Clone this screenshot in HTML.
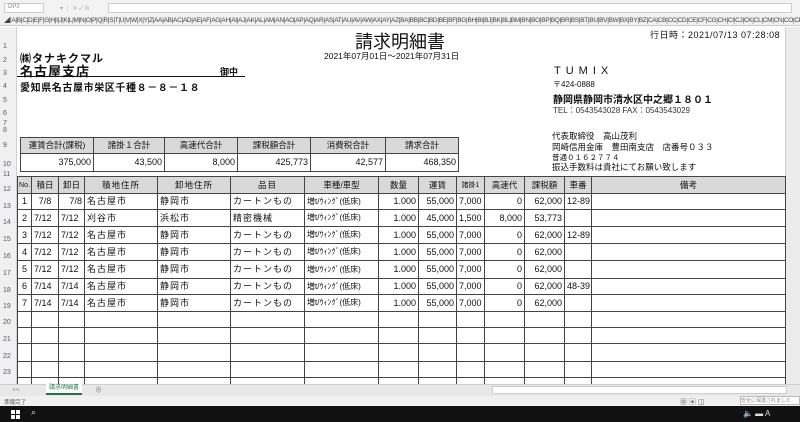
<!DOCTYPE html>
<html><head><meta charset="utf-8"><style>
*{margin:0;padding:0;box-sizing:border-box}
body{width:800px;height:422px;overflow:hidden;background:#fff;font-family:"Liberation Sans","Noto Sans CJK JP",sans-serif;position:relative;color:#111}
.a{position:absolute;white-space:nowrap}
.rn{position:absolute;left:3px;font-size:7px;color:#556;width:12px}
table{border-collapse:collapse;position:absolute;table-layout:fixed}
td{border:1px solid #444;font-size:9px;padding:0 2px;white-space:nowrap;overflow:hidden;line-height:1;letter-spacing:0}
.m td:nth-child(4),.m td:nth-child(5),.m td:nth-child(6){letter-spacing:1px}
.g td{background:#d9d9d9;text-align:center;font-size:8.5px}
.r{text-align:right}.c{text-align:center}
</style></head><body>
<div class="a" style="left:0;top:0;width:800px;height:16px;background:#f3f3f3"></div>
<div class="a" style="left:4px;top:3px;width:40px;height:10px;background:#fff;border:1px solid #ccc;font-size:6px;color:#888;padding-left:3px">DP2</div>
<div class="a" style="left:60px;top:3px;font-size:6px;color:#aaa">▾ ⋮ ✕ ✓ <i>fx</i></div>
<div class="a" style="left:108px;top:3px;width:684px;height:10px;background:#fff;border:1px solid #ccc"></div>
<div class="a" style="left:0;top:16px;width:800px;height:10px;background:#f0f0f0;border-bottom:1px solid #ccc;font-size:6.5px;color:#444;overflow:hidden;letter-spacing:-0.3px;padding-left:4px;line-height:10px">◢ A|B|C|D|E|F|G|H|I|J|K|L|M|N|O|P|Q|R|S|T|U|V|W|X|Y|Z|AA|AB|AC|AD|AE|AF|AG|AH|AI|AJ|AK|AL|AM|AN|AO|AP|AQ|AR|AS|AT|AU|AV|AW|AX|AY|AZ|BA|BB|BC|BD|BE|BF|BG|BH|BI|BJ|BK|BL|BM|BN|BO|BP|BQ|BR|BS|BT|BU|BV|BW|BX|BY|BZ|CA|CB|CC|CD|CE|CF|CG|CH|CI|CJ|CK|CL|CM|CN|CO|CP|CQ|CR|CS|CT|CU|CV|CW|CX|CY|CZ|DA|DB|DC|DD|DE|DF|DG|DH|DI</div>
<div class="a" style="left:0;top:27px;width:17px;height:357px;background:#f0f0f0;border-right:1px solid #d0d0d0"></div>
<div class="a" style="left:785px;top:27px;width:15px;height:357px;background:#ececec;border-left:1px solid #d0d0d0"></div>
<div class="rn" style="top:43px">1</div><div class="rn" style="top:57px">2</div><div class="rn" style="top:70px">3</div><div class="rn" style="top:83px">4</div><div class="rn" style="top:97px">5</div><div class="rn" style="top:110px">6</div><div class="rn" style="top:120px">7</div><div class="rn" style="top:127px">8</div><div class="rn" style="top:142px">9</div><div class="rn" style="top:161px">10</div><div class="rn" style="top:171px">11</div>
<div class="rn" style="top:186px">12</div><div class="rn" style="top:203px">13</div><div class="rn" style="top:219px">14</div><div class="rn" style="top:236px">15</div><div class="rn" style="top:253px">16</div><div class="rn" style="top:270px">17</div><div class="rn" style="top:287px">18</div><div class="rn" style="top:303px">19</div><div class="rn" style="top:319px">20</div><div class="rn" style="top:336px">21</div><div class="rn" style="top:353px">22</div><div class="rn" style="top:369px">23</div>
<div class="a" style="left:355px;top:28px;font-size:18px">請求明細書</div>
<div class="a" style="left:324px;top:50px;font-size:8.5px">2021年07月01日～2021年07月31日</div>
<div class="a" style="left:650px;top:28px;font-size:9px;letter-spacing:0.5px">行日時：2021/07/13 07:28:08</div>
<div class="a" style="left:20px;top:50px;font-size:11px;font-weight:bold;letter-spacing:1px">㈱タナキクマル</div>
<div class="a" style="left:20px;top:61px;font-size:13px;font-weight:bold;letter-spacing:1px">名古屋支店</div>
<div class="a" style="left:220px;top:65px;font-size:9px;font-weight:bold">御中</div>
<div class="a" style="left:17px;top:76px;width:228px;height:1px;background:#111"></div>
<div class="a" style="left:20px;top:79px;font-size:10px;font-weight:bold;letter-spacing:0.6px">愛知県名古屋市栄区千種８－８－１８</div>
<div class="a" style="left:554px;top:65px;font-size:11px;letter-spacing:5px">TUMIX</div>
<div class="a" style="left:553px;top:79px;font-size:8px">〒424-0888</div>
<div class="a" style="left:553px;top:91px;font-size:10px;font-weight:bold">静岡県静岡市清水区中之郷１８０１</div>
<div class="a" style="left:553px;top:105px;font-size:8px;color:#333">TEL：0543543028 FAX：0543543029</div>
<div class="a" style="left:552px;top:130px;font-size:8.5px">代表取締役　高山茂利</div>
<div class="a" style="left:552px;top:141px;font-size:8.5px">岡崎信用金庫　豊田南支店　店番号０３３</div>
<div class="a" style="left:552px;top:152px;font-size:7.5px">普通０１６２７７４</div>
<div class="a" style="left:552px;top:161px;font-size:8.5px">振込手数料は貴社にてお願い致します</div>
<table style="left:20px;top:137px;width:438px">
<colgroup><col style="width:73px"><col style="width:71px"><col style="width:73px"><col style="width:73px"><col style="width:75px"><col style="width:73px"></colgroup>
<tr class="g" style="height:16px"><td>運賃合計(課税)</td><td>諸掛１合計</td><td>高速代合計</td><td>課税額合計</td><td>消費税合計</td><td>請求合計</td></tr>
<tr style="height:18px"><td class="r">375,000</td><td class="r">43,500</td><td class="r">8,000</td><td class="r">425,773</td><td class="r">42,577</td><td class="r">468,350</td></tr>
</table>
<table class="m" style="left:17px;top:176px;width:768px">
<colgroup><col style="width:14px"><col style="width:27px"><col style="width:26px"><col style="width:73px"><col style="width:73px"><col style="width:74px"><col style="width:74px"><col style="width:40px"><col style="width:38px"><col style="width:28px"><col style="width:40px"><col style="width:40px"><col style="width:27px"><col style="width:194px"></colgroup>
<tr class="g" style="height:17px"><td style="font-size:7px;padding:0">No.</td><td>積日</td><td>卸日</td><td>積地住所</td><td>卸地住所</td><td>品目</td><td>車種/車型</td><td>数量</td><td>運賃</td><td style="font-size:7px">諸掛1</td><td>高速代</td><td>課税額</td><td>車番</td><td>備考</td></tr>
<tr style="height:16px"><td class="c">1</td><td class="c">7/8</td><td class="r">7/8</td><td>名古屋市</td><td>静岡市</td><td>カートンもの</td><td style="font-size:8px">増t/ｳｨﾝｸﾞ(低床)</td><td class="r">1.000</td><td class="r">55,000</td><td>7,000</td><td class="r">0</td><td class="r">62,000</td><td>12-89</td><td></td></tr>
<tr style="height:17px"><td class="c">2</td><td>7/12</td><td>7/12</td><td>刈谷市</td><td>浜松市</td><td>精密機械</td><td style="font-size:8px">増t/ｳｨﾝｸﾞ(低床)</td><td class="r">1.000</td><td class="r">45,000</td><td>1,500</td><td class="r">8,000</td><td class="r">53,773</td><td></td><td></td></tr>
<tr style="height:17px"><td class="c">3</td><td>7/12</td><td>7/12</td><td>名古屋市</td><td>静岡市</td><td>カートンもの</td><td style="font-size:8px">増t/ｳｨﾝｸﾞ(低床)</td><td class="r">1.000</td><td class="r">55,000</td><td>7,000</td><td class="r">0</td><td class="r">62,000</td><td>12-89</td><td></td></tr>
<tr style="height:17px"><td class="c">4</td><td>7/12</td><td>7/12</td><td>名古屋市</td><td>静岡市</td><td>カートンもの</td><td style="font-size:8px">増t/ｳｨﾝｸﾞ(低床)</td><td class="r">1.000</td><td class="r">55,000</td><td>7,000</td><td class="r">0</td><td class="r">62,000</td><td></td><td></td></tr>
<tr style="height:18px"><td class="c">5</td><td>7/12</td><td>7/12</td><td>名古屋市</td><td>静岡市</td><td>カートンもの</td><td style="font-size:8px">増t/ｳｨﾝｸﾞ(低床)</td><td class="r">1.000</td><td class="r">55,000</td><td>7,000</td><td class="r">0</td><td class="r">62,000</td><td></td><td></td></tr>
<tr style="height:16px"><td class="c">6</td><td>7/14</td><td>7/14</td><td>名古屋市</td><td>静岡市</td><td>カートンもの</td><td style="font-size:8px">増t/ｳｨﾝｸﾞ(低床)</td><td class="r">1.000</td><td class="r">55,000</td><td>7,000</td><td class="r">0</td><td class="r">62,000</td><td>48-39</td><td></td></tr>
<tr style="height:17px"><td class="c">7</td><td>7/14</td><td>7/14</td><td>名古屋市</td><td>静岡市</td><td>カートンもの</td><td style="font-size:8px">増t/ｳｨﾝｸﾞ(低床)</td><td class="r">1.000</td><td class="r">55,000</td><td>7,000</td><td class="r">0</td><td class="r">62,000</td><td></td><td></td></tr>
<tr style="height:16px"><td></td><td></td><td></td><td></td><td></td><td></td><td></td><td></td><td></td><td></td><td></td><td></td><td></td><td></td></tr>
<tr style="height:16px"><td></td><td></td><td></td><td></td><td></td><td></td><td></td><td></td><td></td><td></td><td></td><td></td><td></td><td></td></tr>
<tr style="height:18px"><td></td><td></td><td></td><td></td><td></td><td></td><td></td><td></td><td></td><td></td><td></td><td></td><td></td><td></td></tr>
<tr style="height:16px"><td></td><td></td><td></td><td></td><td></td><td></td><td></td><td></td><td></td><td></td><td></td><td></td><td></td><td></td></tr>
<tr style="height:16px"><td></td><td></td><td></td><td></td><td></td><td></td><td></td><td></td><td></td><td></td><td></td><td></td><td></td><td></td></tr>
</table>
<div class="a" style="left:0;top:384px;width:800px;height:12px;background:#e8e8e8;border-top:1px solid #ccc"></div>
<div class="a" style="left:12px;top:386px;font-size:6px;color:#aaa">◂ ▸</div>
<div class="a" style="left:46px;top:384px;width:36px;height:11px;background:#fff;border-bottom:2px solid #217346;font-size:6px;color:#217346;text-align:center;line-height:9px">請求明細書</div>
<div class="a" style="left:95px;top:385px;font-size:7px;color:#888">⊕</div>
<div class="a" style="left:492px;top:386px;width:295px;height:8px;background:#fff;border:1px solid #ccc"></div>
<div class="a" style="left:0;top:396px;width:800px;height:10px;background:#f0f0f0;font-size:5.5px;color:#555;padding:2px 4px">準備完了</div>
<div class="a" style="left:680px;top:397px;font-size:7px;color:#666">▦ ▣ ◫</div>
<div class="a" style="left:740px;top:396px;width:60px;height:9px;background:#fff;border:1px solid #bbb;font-size:5px;color:#888">安全に保護されました</div>
<div class="a" style="left:0;top:406px;width:800px;height:16px;background:#111"></div>
<svg class="a" style="left:11px;top:410px" width="9" height="9"><rect x="0" y="0" width="4" height="4" fill="#fff"/><rect x="5" y="0" width="4" height="4" fill="#fff"/><rect x="0" y="5" width="4" height="4" fill="#fff"/><rect x="5" y="5" width="4" height="4" fill="#fff"/></svg>
<div class="a" style="left:31px;top:407px;font-size:9px;color:#ddd">⌕</div>
<div class="a" style="left:743px;top:409px;font-size:8px;color:#ddd">🔈 ▬ A</div>
</body></html>
